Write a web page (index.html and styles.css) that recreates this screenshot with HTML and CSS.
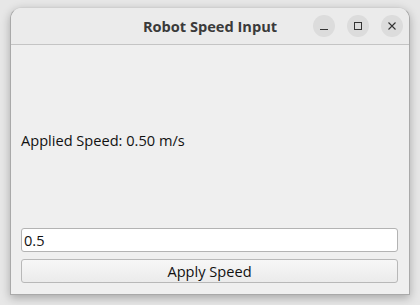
FILE: index.html
```html
<!DOCTYPE html>
<html lang="en">
<head>
  <meta charset="UTF-8">
  <title>Robot Speed Input</title>
  <link rel="stylesheet" href="styles.css">
</head>
<body>
  <div class="window">
    <div class="titlebar">
      <span class="title">Robot Speed Input</span>
      <div class="controls">
        <span class="ctrl">
          <svg width="10" height="10" viewBox="0 0 10 10"><path d="M1 8.5h8" stroke="#333" stroke-width="1"/></svg>
        </span>
        <span class="ctrl">
          <svg width="10" height="10" viewBox="0 0 10 10"><rect x="1.5" y="1.5" width="7" height="7" fill="none" stroke="#333" stroke-width="1"/></svg>
        </span>
        <span class="ctrl">
          <svg width="10" height="10" viewBox="0 0 10 10"><path d="M1.5 1.5l7 7M8.5 1.5l-7 7" stroke="#333" stroke-width="1.1"/></svg>
        </span>
      </div>
    </div>
    <div class="content">
      <div class="label-area">
        <span id="speedLabel">Applied Speed: 0.50 m/s</span>
      </div>
      <input type="text" id="speed" class="field" value="0.5">
      <button class="button" onclick="applySpeed()">Apply Speed</button>
    </div>
  </div>

  <script>
    function applySpeed() {
      const v = parseFloat(document.getElementById('speed').value);
      if (isNaN(v)) return;
      document.getElementById('speedLabel').textContent = 'Applied Speed: ' + v.toFixed(2) + ' m/s';
    }
  </script>
</body>
</html>
```

FILE: styles.css
```css
body {
  margin: 0;
  width: 420px;
  height: 305px;
  background: #e7e7e7;
  font-family: 'Open Sans', sans-serif;
  overflow: hidden;
}

.window {
  margin: 7px 10px 0;
  width: 400px;
  height: 288px;
  box-sizing: border-box;
  display: flex;
  flex-direction: column;
  background: #efefef;
  border: 1px solid #a9a9a9;
  border-top-color: #d0d0d0;
  border-radius: 12px 12px 0 0;
  box-shadow: 0 3px 10px rgba(0,0,0,0.28);
  overflow: hidden;
}

.titlebar {
  height: 36px;
  flex: none;
  display: flex;
  align-items: center;
  justify-content: center;
  position: relative;
  background: #ebebeb;
  border-bottom: 1px solid #c4c4c4;
}

.title {
  font-weight: 700;
  font-size: 14.6px;
  color: #3a3a3a;
}

.controls {
  position: absolute;
  right: 6px;
  top: 7px;
  display: flex;
  gap: 12px;
}

.ctrl {
  width: 22px;
  height: 22px;
  border-radius: 50%;
  background: #dcdcdc;
  display: flex;
  align-items: center;
  justify-content: center;
}

.content {
  flex: 1;
  display: flex;
  flex-direction: column;
  gap: 7px;
  padding: 11px 11px 11px 10px;
}

.label-area {
  flex: 1;
  display: flex;
  align-items: center;
  padding-top: 2px;
  font-size: 14.6px;
  color: #111;
}

.field {
  height: 24px;
  box-sizing: border-box;
  margin: 0;
  padding: 0 2px;
  font-family: 'Open Sans', sans-serif;
  font-size: 14.6px;
  color: #111;
  background: #fff;
  border: 1px solid #b3b3b3;
  border-radius: 3px;
  outline: none;
}

.button {
  height: 24px;
  margin: 0;
  font-family: 'Open Sans', sans-serif;
  font-size: 14.6px;
  color: #111;
  background: linear-gradient(#f7f7f7, #ebebeb);
  border: 1px solid #b8b8b8;
  border-radius: 3px;
  cursor: pointer;
}
```
